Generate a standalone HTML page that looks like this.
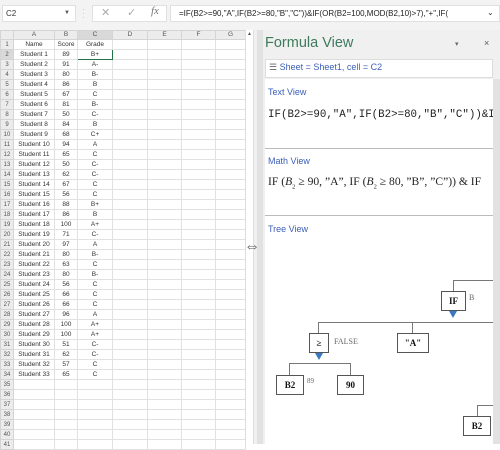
<!DOCTYPE html>
<html><head><meta charset="utf-8"><style>
*{margin:0;padding:0;box-sizing:border-box}
body{width:500px;height:444px;overflow:hidden;background:#fff;font-family:"Liberation Sans",sans-serif;position:relative}
.a{position:absolute}
#top{left:0;top:0;width:500px;height:30px;background:#f3f3f3}
table{position:absolute;left:0;top:30px;border-collapse:collapse;table-layout:fixed;font-size:6.5px;color:#333}
td{height:10px;border:1px solid #e1e1e1;text-align:center;line-height:8px;overflow:hidden;white-space:nowrap;padding:0}
td.h{background:#ececec;color:#555;border-color:#d4d4d4;font-size:6px}
tr.hd td{height:9px;background:#ececec;color:#555;border-color:#d4d4d4}
.box{position:absolute;border:1px solid #555;background:#fff;font-family:"Liberation Serif",serif;font-weight:bold;font-size:9px;text-align:center;color:#111}
.ln{position:absolute;background:#777}
.tri{position:absolute;width:0;height:0;border-left:4px solid transparent;border-right:4px solid transparent;border-top:7px solid #3a78c0}
.sv{font-family:"Liberation Serif",serif;font-size:8px;color:#666;position:absolute}
.lbl{position:absolute;color:#3b5fb8;font-size:9px;left:268px}
</style></head><body>
<div id="top" class="a"></div>
<div class="a" style="left:2px;top:5px;width:74px;height:17px;background:#fff;border:1px solid #e0e0e0;font-size:8px;line-height:15px;padding-left:3px;color:#333">C2<span style="position:absolute;right:5px;font-size:6px;color:#555">▼</span></div>
<div class="a" style="left:82px;top:8px;color:#bbb;font-size:8px;line-height:4px">·<br>·<br>·</div>
<div class="a" style="left:92px;top:5px;width:75px;height:17px;background:#fff;border:1px solid #e0e0e0"></div>
<div class="a" style="left:101px;top:6px;color:#aaa;font-size:11px">✕</div>
<div class="a" style="left:127px;top:6px;color:#aaa;font-size:11px">✓</div>
<div class="a" style="left:151px;top:5px;color:#777;font-size:11px;font-family:'Liberation Serif',serif;font-style:italic">fx</div>
<div class="a" style="left:170px;top:5px;width:330px;height:17px;background:#fff;border:1px solid #e0e0e0;font-size:8px;line-height:15px;padding-left:8px;color:#222;white-space:nowrap;overflow:hidden">=IF(B2&gt;=90,"A",IF(B2&gt;=80,"B","C"))&amp;IF(OR(B2=100,MOD(B2,10)&gt;7),"+",IF(</div>
<div class="a" style="left:487px;top:8px;font-size:8px;color:#333">⌄</div>

<table>
<colgroup><col style="width:13px"><col style="width:41px"><col style="width:23px"><col style="width:35px"><col style="width:35px"><col style="width:34px"><col style="width:34px"><col style="width:30px"></colgroup>
<tr class="hd"><td></td><td>A</td><td>B</td><td style="background:#d9d9d9">C</td><td>D</td><td>E</td><td>F</td><td>G</td></tr>
<tr><td class="h">1</td><td>Name</td><td>Score</td><td>Grade</td><td></td><td></td><td></td><td></td></tr>
<tr><td class="h" style="background:#d9d9d9">2</td><td>Student 1</td><td>89</td><td style="border:1.5px solid #217346">B+</td><td></td><td></td><td></td><td></td></tr>
<tr><td class="h">3</td><td>Student 2</td><td>91</td><td>A-</td><td></td><td></td><td></td><td></td></tr>
<tr><td class="h">4</td><td>Student 3</td><td>80</td><td>B-</td><td></td><td></td><td></td><td></td></tr>
<tr><td class="h">5</td><td>Student 4</td><td>86</td><td>B</td><td></td><td></td><td></td><td></td></tr>
<tr><td class="h">6</td><td>Student 5</td><td>67</td><td>C</td><td></td><td></td><td></td><td></td></tr>
<tr><td class="h">7</td><td>Student 6</td><td>81</td><td>B-</td><td></td><td></td><td></td><td></td></tr>
<tr><td class="h">8</td><td>Student 7</td><td>50</td><td>C-</td><td></td><td></td><td></td><td></td></tr>
<tr><td class="h">9</td><td>Student 8</td><td>84</td><td>B</td><td></td><td></td><td></td><td></td></tr>
<tr><td class="h">10</td><td>Student 9</td><td>68</td><td>C+</td><td></td><td></td><td></td><td></td></tr>
<tr><td class="h">11</td><td>Student 10</td><td>94</td><td>A</td><td></td><td></td><td></td><td></td></tr>
<tr><td class="h">12</td><td>Student 11</td><td>65</td><td>C</td><td></td><td></td><td></td><td></td></tr>
<tr><td class="h">13</td><td>Student 12</td><td>50</td><td>C-</td><td></td><td></td><td></td><td></td></tr>
<tr><td class="h">14</td><td>Student 13</td><td>62</td><td>C-</td><td></td><td></td><td></td><td></td></tr>
<tr><td class="h">15</td><td>Student 14</td><td>67</td><td>C</td><td></td><td></td><td></td><td></td></tr>
<tr><td class="h">16</td><td>Student 15</td><td>56</td><td>C</td><td></td><td></td><td></td><td></td></tr>
<tr><td class="h">17</td><td>Student 16</td><td>88</td><td>B+</td><td></td><td></td><td></td><td></td></tr>
<tr><td class="h">18</td><td>Student 17</td><td>86</td><td>B</td><td></td><td></td><td></td><td></td></tr>
<tr><td class="h">19</td><td>Student 18</td><td>100</td><td>A+</td><td></td><td></td><td></td><td></td></tr>
<tr><td class="h">20</td><td>Student 19</td><td>71</td><td>C-</td><td></td><td></td><td></td><td></td></tr>
<tr><td class="h">21</td><td>Student 20</td><td>97</td><td>A</td><td></td><td></td><td></td><td></td></tr>
<tr><td class="h">22</td><td>Student 21</td><td>80</td><td>B-</td><td></td><td></td><td></td><td></td></tr>
<tr><td class="h">23</td><td>Student 22</td><td>63</td><td>C</td><td></td><td></td><td></td><td></td></tr>
<tr><td class="h">24</td><td>Student 23</td><td>80</td><td>B-</td><td></td><td></td><td></td><td></td></tr>
<tr><td class="h">25</td><td>Student 24</td><td>56</td><td>C</td><td></td><td></td><td></td><td></td></tr>
<tr><td class="h">26</td><td>Student 25</td><td>66</td><td>C</td><td></td><td></td><td></td><td></td></tr>
<tr><td class="h">27</td><td>Student 26</td><td>66</td><td>C</td><td></td><td></td><td></td><td></td></tr>
<tr><td class="h">28</td><td>Student 27</td><td>96</td><td>A</td><td></td><td></td><td></td><td></td></tr>
<tr><td class="h">29</td><td>Student 28</td><td>100</td><td>A+</td><td></td><td></td><td></td><td></td></tr>
<tr><td class="h">30</td><td>Student 29</td><td>100</td><td>A+</td><td></td><td></td><td></td><td></td></tr>
<tr><td class="h">31</td><td>Student 30</td><td>51</td><td>C-</td><td></td><td></td><td></td><td></td></tr>
<tr><td class="h">32</td><td>Student 31</td><td>62</td><td>C-</td><td></td><td></td><td></td><td></td></tr>
<tr><td class="h">33</td><td>Student 32</td><td>57</td><td>C</td><td></td><td></td><td></td><td></td></tr>
<tr><td class="h">34</td><td>Student 33</td><td>65</td><td>C</td><td></td><td></td><td></td><td></td></tr>
<tr><td class="h">35</td><td></td><td></td><td></td><td></td><td></td><td></td><td></td></tr>
<tr><td class="h">36</td><td></td><td></td><td></td><td></td><td></td><td></td><td></td></tr>
<tr><td class="h">37</td><td></td><td></td><td></td><td></td><td></td><td></td><td></td></tr>
<tr><td class="h">38</td><td></td><td></td><td></td><td></td><td></td><td></td><td></td></tr>
<tr><td class="h">39</td><td></td><td></td><td></td><td></td><td></td><td></td><td></td></tr>
<tr><td class="h">40</td><td></td><td></td><td></td><td></td><td></td><td></td><td></td></tr>
<tr><td class="h">41</td><td></td><td></td><td></td><td></td><td></td><td></td><td></td></tr>
</table>
<!-- scrollbar -->
<div class="a" style="left:245px;top:30px;width:9px;height:414px;background:#fff;border-left:1px solid #ddd;border-right:1px solid #ddd"></div>
<div class="a" style="left:247px;top:31px;font-size:5px;color:#555">▲</div>
<div class="a" style="left:254px;top:30px;width:3px;height:414px;background:#f0f0f0"></div>
<!-- panel -->
<div class="a" style="left:257px;top:30px;width:243px;height:414px;background:#f0f0f0;border-left:6px solid #e2e2e2"></div>
<div class="a" style="left:265px;top:35px;font-size:14.5px;color:#3e7a5c">Formula View</div>
<div class="a" style="left:455px;top:40px;font-size:7px;color:#666">▾</div>
<div class="a" style="left:484px;top:38px;font-size:9px;color:#555">×</div>
<div class="a" style="left:265px;top:59px;width:228px;height:19px;background:#fff;border:1px solid #ddd"></div>
<div class="a" style="left:269px;top:62px;font-size:9px;color:#3b5fb8;white-space:nowrap"><span style="color:#666">☰</span> Sheet = Sheet1, cell = C2</div>
<div class="a" style="left:265px;top:79px;width:228px;height:365px;background:#fff"></div>
<div class="a" style="left:265px;top:148px;width:228px;height:1px;background:#bbb"></div>
<div class="a" style="left:265px;top:215px;width:228px;height:1px;background:#bbb"></div>
<div class="lbl" style="top:87px">Text View</div>
<div class="a" style="left:268px;top:109px;width:225px;overflow:hidden;white-space:nowrap;font-family:'Liberation Mono',monospace;font-size:10.8px;color:#222">IF(B2&gt;=90,"A",IF(B2&gt;=80,"B","C"))&amp;IF</div>
<div class="lbl" style="top:156px">Math View</div>
<div class="a" style="left:268px;top:175px;width:225px;overflow:hidden;white-space:nowrap;font-family:'Liberation Serif',serif;font-size:11.6px;color:#222">IF (<i>B</i><sub style="font-size:6.5px">2</sub> ≥ 90, ”A”, IF (<i>B</i><sub style="font-size:6.5px">2</sub> ≥ 80, ”B”, ”C”)) &amp; IF</div>
<div class="lbl" style="top:224px">Tree View</div>
<div class="a" style="left:244px;top:240px;font-size:16px;color:#555;line-height:14px">⇔</div>
<!-- tree -->
<div class="ln" style="left:453px;top:280px;width:40px;height:1px"></div>
<div class="ln" style="left:453px;top:280px;width:1px;height:11px"></div>
<div class="box" style="left:441px;top:291px;width:25px;height:20px;line-height:18px">IF</div>
<div class="sv" style="left:469px;top:293px">B</div>
<div class="tri" style="left:449px;top:311px"></div>
<div class="ln" style="left:318px;top:322px;width:175px;height:1px"></div>
<div class="ln" style="left:318px;top:322px;width:1px;height:11px"></div>
<div class="ln" style="left:412px;top:322px;width:1px;height:11px"></div>
<div class="box" style="left:309px;top:333px;width:20px;height:20px;line-height:18px">≥</div>
<div class="sv" style="left:334px;top:337px">FALSE</div>
<div class="tri" style="left:315px;top:353px"></div>
<div class="box" style="left:397px;top:333px;width:32px;height:20px;line-height:18px">"A"</div>
<div class="ln" style="left:289px;top:363px;width:61px;height:1px"></div>
<div class="ln" style="left:289px;top:363px;width:1px;height:12px"></div>
<div class="ln" style="left:350px;top:363px;width:1px;height:12px"></div>
<div class="box" style="left:276px;top:375px;width:28px;height:20px;line-height:18px">B2</div>
<div class="sv" style="left:307px;top:377px;font-size:7px">89</div>
<div class="box" style="left:337px;top:375px;width:27px;height:20px;line-height:18px">90</div>
<div class="ln" style="left:477px;top:405px;width:16px;height:1px"></div>
<div class="ln" style="left:477px;top:405px;width:1px;height:11px"></div>
<div class="box" style="left:463px;top:416px;width:28px;height:20px;line-height:18px">B2</div>
<div class="a" style="left:493px;top:79px;width:7px;height:365px;background:#e2e2e2"></div>
</body></html>
